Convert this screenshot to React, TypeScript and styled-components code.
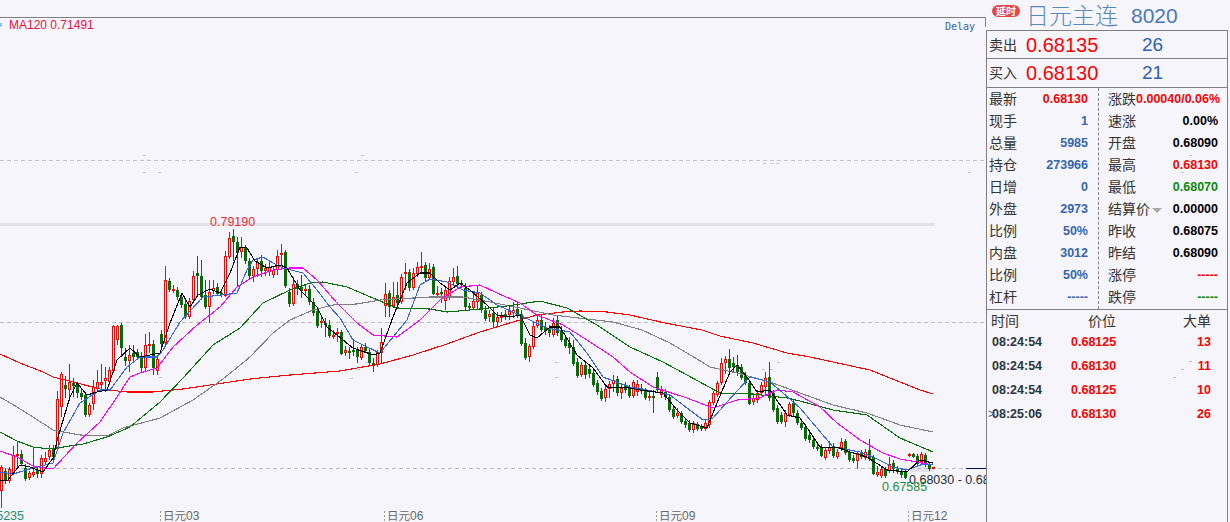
import React from 'react';
import styled, { createGlobalStyle } from 'styled-components';

const PAGE_BG = '#f5f5fb';
const RED = '#ff0000';
const CANDLE_GREEN = '#0a6a0a';
const BLUE_VALUE = '#3565ae';
const FRAME_GRAY = '#808080';
const CJK_STACK = '"Noto Sans CJK SC", "Liberation Sans", sans-serif';
const NUM_STACK = '"Liberation Sans", Arial, sans-serif';

// kind top bottom high low, one candle every 4px starting at x=1
const CANDLES = `r 467 491 465 508|g 471 481 468 484|r 469 481 467 483|r 455 473 446 475|r 454 456 442 467|g 454 464 450 466|g 468 479 464 481|r 473 478 471 480|r 472 475 447 477|g 470 474 466 478|r 458 474 455 478|r 458 462 452 465|r 450 457 445 460|g 449 457 445 460|r 399 449 391 450|r 374 407 372 417|g 385 389 376 398|r 382 390 364 398|g 383 386 378 397|g 385 393 382 398|g 393 397 388 400|g 395 415 393 417|r 405 415 403 417|r 387 404 380 410|r 382 389 370 392|r 382 385 364 390|r 378 381 367 392|r 370 382 367 385|r 326 371 325 373|r 326 340 325 345|g 325 348 323 355|g 357 361 348 366|r 355 361 345 372|g 353 357 345 362|g 352 357 349 360
g 358 368 352 372|r 345 368 334 372|r 344 346 332 353|g 344 368 340 375|r 359 371 355 375|g 334 344 330 347|r 280 343 266 345|g 281 290 278 292|r 289 291 285 293|g 290 297 287 300|g 297 305 293 308|g 304 317 300 319|r 301 317 298 319|r 276 300 271 302|g 273 276 256 295|g 276 297 260 300|g 295 307 280 309|r 292 307 280 323|r 288 291 280 294|g 287 294 283 296|g 293 295 290 297|r 256 296 251 297|r 238 257 232 259|g 236 242 229 261|g 242 253 237 286|r 247 252 237 258|g 247 261 245 264|g 261 276 258 279|r 269 276 266 282|r 262 269 258 277|g 261 271 255 277|r 268 271 264 276|r 267 272 262 276|r 270 275 266 278|r 256 270 250 275|r 253 255 244 265|g 252 286 250 288|g 292 304 288 307|r 284 304 277 306|g 284 289 280 295|g 287 291 275 298|r 289 291 285 295|g 289 302 285 305|g 302 313 298 316|g 311 326 308 328|r 321 323 316 328|g 323 325 318 337|g 325 336 320 338|r 335 337 330 339|r 332 334 328 342|g 332 354 330 355|r 350 353 346 356|g 351 353 347 359|g 350 352 339 356|g 350 357 347 363|r 347 358 345 360|g 347 351 343 353|g 352 363 348 365|g 363 365 358 372|r 352 365 350 367|r 342 353 328 364
r 294 306 283 317|g 293 307 290 317|r 297 306 282 308|g 295 303 282 306|r 277 302 274 304|r 272 274 263 290|g 272 288 269 291|r 273 288 268 290|r 267 274 262 277|r 266 268 252 272|g 265 278 262 281|r 269 278 263 280|g 267 294 264 295|r 293 295 286 297|g 292 294 288 303|r 290 301 286 310|r 281 297 277 300|r 277 282 268 285|g 276 284 266 287|g 283 285 280 288|g 288 307 283 310|g 306 308 303 311|r 301 308 293 310|r 293 302 285 310|g 295 310 292 313|g 310 319 306 321|r 314 317 310 322|g 313 322 308 327|r 317 322 312 327|r 316 318 312 322|g 314 317 310 320|r 311 315 305 320|r 310 313 302 318|g 309 315 303 318|g 314 344 310 346|g 343 358 338 360|r 346 357 344 362|r 326 347 322 349|r 320 326 315 328|g 320 330 315 332|g 327 331 322 335|g 329 333 325 337|r 323 335 318 337|g 320 333 316 336|g 330 340 326 342|g 339 346 335 348|g 343 348 337 354|g 347 364 340 366|g 362 376 358 378|r 365 375 362 377|g 365 375 362 379|g 369 374 364 378|g 373 385 370 387|g 383 392 380 395|g 391 399 388 401|r 389 398 386 402|r 384 389 381 398|r 380 384 375 392|g 379 393 376 396
r 388 393 384 399|g 386 390 382 393|g 388 396 385 398|r 382 396 380 398|r 384 392 380 396|g 388 390 384 394|g 390 398 388 400|r 396 398 392 401|g 396 398 390 413|g 377 390 372 393|r 390 395 386 398|g 392 397 389 400|g 397 410 394 412|g 409 417 406 419|r 413 416 408 418|g 413 422 411 424|g 421 425 418 428|g 423 430 420 432|r 423 430 421 433|g 424 429 422 431|g 427 429 424 431|r 423 429 420 431|r 402 425 400 428|r 393 403 391 405|r 383 395 381 397|r 363 383 358 385|r 359 363 356 374|g 359 368 349 372|g 363 367 357 372|g 365 372 355 376|g 367 378 364 380|g 375 383 372 385|g 383 404 380 405|r 398 402 393 405|r 393 400 390 403|r 385 393 382 396|r 378 387 372 396|g 377 398 362 401|g 393 410 390 412|g 408 422 405 424|g 415 422 412 424|r 413 422 410 427|r 404 415 402 417|g 403 413 400 416|g 413 423 410 425
g 423 428 420 430|g 427 439 424 441|g 435 440 432 443|g 440 447 437 449|g 447 449 444 451|g 447 456 444 457|r 450 458 448 460|r 447 451 441 454|g 446 456 443 458|r 452 457 449 459|r 442 448 438 451|g 441 453 439 455|g 452 460 449 462|g 458 461 455 463|r 453 461 451 469|g 453 457 450 459|r 452 458 449 460|g 450 459 439 461|g 457 474 455 475|r 472 475 466 477|r 469 476 467 478|g 469 476 467 478|r 464 471 457 473|g 463 469 460 473|g 469 472 466 474|g 471 475 469 478|g 472 478 470 479|r 454 456 453 457|g 454 457 453 458|g 456 464 454 465|r 454 462 452 465|g 455 464 453 467|g 464 469 462 471|f 467 469 467 469`;

const MA_LINES: { color: string; points: string }[] = [
  {
    color: '#ff0000',
    points:
      '0,354 20,363 43,372 53,377 77,383 100,389 127,392 153,392 183,389 217,384 250,379 290,375 340,371 380,364 413,355 447,344 480,332 513,322 537,315 563,312 580,311 607,312 630,315 665,323 702,330 720,336 753,343 787,353 810,357 870,370 920,390 933,394',
  },
  {
    color: '#808080',
    points:
      '0,397 17,407 33,417 53,430 80,435 107,436 123,428 160,418 193,400 223,379 250,357 273,333 290,320 313,310 333,305 357,304 380,300 430,297 463,297 490,302 520,308 553,315 587,319 613,322 642,330 670,343 702,362 710,367 737,373 770,382 800,393 833,405 867,413 900,425 933,432',
  },
  {
    color: '#007000',
    points:
      '0,432 17,441 33,447 50,449 83,444 107,437 130,427 160,402 183,378 213,345 240,328 263,303 290,290 310,283 323,282 347,287 373,298 397,308 430,309 447,312 470,310 507,306 540,301 567,308 597,325 630,347 663,362 687,375 720,393 753,394 787,398 800,401 833,410 867,415 900,438 933,452',
  },
  {
    color: '#ff00ff',
    points:
      '0,451 17,457 33,466 53,469 77,443 100,422 117,397 130,377 140,373 157,368 173,347 197,325 220,307 237,287 253,277 273,270 290,268 303,268 317,280 337,303 357,323 373,335 397,337 420,320 440,300 460,287 480,285 497,293 520,303 537,315 563,325 587,340 613,357 630,372 653,387 687,398 713,408 737,400 760,398 777,390 793,392 820,407 837,423 860,440 883,453 900,459 917,462 933,465',
  },
  {
    color: '#3366dd',
    points:
      '0,472 13,474 33,468 53,463 63,433 80,403 100,390 110,390 127,367 140,357 157,357 163,350 180,322 203,297 222,295 237,293 247,270 253,260 263,257 273,263 283,268 303,273 317,290 330,307 340,318 353,340 367,347 380,353 407,320 420,285 430,279 447,282 463,290 480,293 497,305 513,312 547,328 570,332 587,353 603,377 630,387 647,390 670,395 687,408 703,420 713,418 727,402 750,377 770,382 783,393 800,408 817,428 833,447 860,452 873,457 893,467 907,470 920,465 933,464',
  },
  {
    color: '#000000',
    points:
      '0,481 8,480 20,465 30,467 43,472 53,458 58,437 70,397 77,383 87,395 97,392 107,390 117,360 130,348 140,357 150,355 160,353 170,323 182,293 190,307 198,295 210,289 220,293 230,273 240,247 247,248 255,261 267,268 280,265 287,268 300,290 317,307 327,327 343,340 353,348 373,355 380,353 393,317 407,283 420,273 430,273 440,283 450,290 460,283 470,290 487,305 497,315 510,317 520,315 530,335 537,338 550,327 560,327 577,355 593,368 607,387 630,388 640,390 663,393 677,410 690,423 707,428 717,403 730,372 737,365 747,377 757,392 770,390 787,415 800,418 810,432 820,447 840,448 850,452 867,457 887,470 907,472 920,460 933,463',
  },
];

const CHART_SPECKS = [
  [143, 155], [143, 172], [158, 172], [361, 155], [355, 172], [763, 163], [771, 163], [776, 163],
  [968, 172], [152, 362], [159, 377], [350, 378], [357, 369], [365, 362], [555, 362], [572, 362],
  [555, 377], [762, 369], [770, 369], [777, 362],
];

const AXIS_LABELS = [
  { tick: 160, label: '日元', num: '03' },
  { tick: 384, label: '日元', num: '06' },
  { tick: 656, label: '日元', num: '09' },
  { tick: 908, label: '日元', num: '12' },
];

const LEFT_STATS = [
  { label: '最新', value: '0.68130', color: RED },
  { label: '现手', value: '1', color: BLUE_VALUE },
  { label: '总量', value: '5985', color: BLUE_VALUE },
  { label: '持仓', value: '273966', color: BLUE_VALUE },
  { label: '日增', value: '0', color: BLUE_VALUE },
  { label: '外盘', value: '2973', color: BLUE_VALUE },
  { label: '比例', value: '50%', color: BLUE_VALUE },
  { label: '内盘', value: '3012', color: BLUE_VALUE },
  { label: '比例', value: '50%', color: BLUE_VALUE },
  { label: '杠杆', value: '-----', color: BLUE_VALUE },
];

const RIGHT_STATS = [
  { label: '涨跌', value: '0.00040/0.06%', color: RED },
  { label: '速涨', value: '0.00%', color: '#000' },
  { label: '开盘', value: '0.68090', color: '#000' },
  { label: '最高', value: '0.68130', color: RED },
  { label: '最低', value: '0.68070', color: '#0a8a0a' },
  { label: '结算价', value: '0.00000', color: '#000', caret: true },
  { label: '昨收', value: '0.68075', color: '#000' },
  { label: '昨结', value: '0.68090', color: '#000' },
  { label: '涨停', value: '-----', color: RED },
  { label: '跌停', value: '-----', color: '#0a8a0a' },
];

const TRADES = [
  { time: '08:24:54', price: '0.68125', size: 13 },
  { time: '08:24:54', price: '0.68130', size: 11 },
  { time: '08:24:54', price: '0.68125', size: 10 },
  { time: '08:25:06', price: '0.68130', size: 26, current: true },
];

const PANEL_SPECKS = [
  [203, 155], [195, 172], [203, 361], [195, 369], [187, 377],
];

const GlobalStyle = createGlobalStyle`
  html, body {
    margin: 0;
    padding: 0;
    background: ${PAGE_BG};
    overflow: hidden;
  }
`;

const Page = styled.div`
  display: flex;
  width: 1230px;
  height: 522px;
  background: ${PAGE_BG};
`;

const ChartArea = styled.div`
  flex: 0 0 986px;
  height: 522px;
  overflow: hidden;
`;

const ChartSvg = styled.svg`
  display: block;
`;

const Panel = styled.aside`
  position: relative;
  flex: 0 0 242px;
  display: flex;
  flex-direction: column;
`;

const Header = styled.header`
  display: flex;
  align-items: flex-start;
  height: 30px;
  padding-left: 6px;
`;

const DelayBadge = styled.span`
  width: 28px;
  height: 12px;
  margin-top: 5px;
  border-radius: 6px;
  background: #e8474c;
  color: #fff;
  font: bold 10px/12px ${CJK_STACK};
  text-align: center;
`;

const Title = styled.h1`
  margin: 0 0 0 6px;
  color: #5a88bd;
  font: 300 23px/29px ${CJK_STACK};
`;

const Code = styled.span`
  margin-left: 13px;
  color: #4a78b8;
  font: 21px/32px ${NUM_STACK};
`;

const Frame = styled.div`
  flex: 1;
  display: flex;
  flex-direction: column;
  border: 1px solid ${FRAME_GRAY};
  border-bottom: none;
`;

const QuoteRow = styled.div<{ $height: number }>`
  display: grid;
  grid-template-columns: 37px 116px auto;
  align-items: center;
  height: ${(p) => p.$height}px;
  padding-left: 2px;
  border-bottom: 1px solid ${FRAME_GRAY};
`;

const Label = styled.span`
  color: #333;
  font: 14px/20px ${CJK_STACK};
  white-space: nowrap;
`;

const RaisedLabel = styled(Label)`
  padding-bottom: 2px;
`;

const StatLabel = styled(RaisedLabel)`
  flex: 0 0 24px;
`;

const QuotePrice = styled.span`
  color: ${RED};
  font: 20px/28px ${NUM_STACK};
`;

const QuoteSize = styled.span`
  color: #2f62ad;
  font: 19px/28px ${NUM_STACK};
`;

const Stats = styled.div`
  display: grid;
  grid-template-columns: 111px minmax(0, 1fr);
  height: 221px;
  border-bottom: 1px solid ${FRAME_GRAY};
`;

const StatColumn = styled.div<{ $divided?: boolean }>`
  display: flex;
  flex-direction: column;
  padding: ${(p) => (p.$divided ? '0 9px 0 9px' : '0 10px 0 2px')};
  border-left: ${(p) => (p.$divided ? `1px dashed ${FRAME_GRAY}` : 'none')};
`;

const StatRow = styled.div`
  position: relative;
  display: flex;
  justify-content: space-between;
  align-items: center;
  height: 22px;
`;

const StatValue = styled.span<{ $color: string }>`
  color: ${(p) => p.$color};
  font: bold 12.5px/22px ${NUM_STACK};
  white-space: nowrap;
`;

const Caret = styled.i`
  position: absolute;
  left: 44px;
  top: 10px;
  width: 0;
  height: 0;
  border-left: 5px solid transparent;
  border-right: 5px solid transparent;
  border-top: 5px solid #a8a8a8;
`;

const TradeHead = styled.div`
  display: grid;
  grid-template-columns: 83px 1fr auto;
  align-items: center;
  height: 20px;
  padding: 0 16px 0 4px;
`;

const PriceHead = styled(Label)`
  margin-left: 14px;
`;

const TradeRow = styled.div`
  position: relative;
  display: grid;
  grid-template-columns: 79px 1fr auto;
  align-items: center;
  height: 24px;
  padding: 0 16px 0 5px;
`;

const TradeTime = styled.span`
  color: #2c3440;
  font: bold 12.5px/24px ${NUM_STACK};
`;

const TradePrice = styled.span`
  color: ${RED};
  font: bold 12.5px/24px ${NUM_STACK};
`;

const Marker = styled.span`
  position: absolute;
  left: 1px;
  top: 0;
  color: #2f62ad;
  font: 12px/24px ${NUM_STACK};
`;

const Speck = styled.i<{ $x: number; $y: number }>`
  position: absolute;
  left: ${(p) => p.$x}px;
  top: ${(p) => p.$y}px;
  width: 3px;
  height: 1px;
  background: #c4c4c8;
`;

type Candle = { kind: string; top: number; bottom: number; high: number; low: number };

function parseCandles(): Candle[] {
  return CANDLES.replace(/\n/g, '|')
    .split('|')
    .map((entry) => {
      const [kind, top, bottom, high, low] = entry.trim().split(' ');
      return { kind, top: +top, bottom: +bottom, high: +high, low: +low };
    });
}

function CandleMark({ candle, x }: { candle: Candle; x: number }) {
  const { kind, top, bottom, high, low } = candle;
  const color = kind === 'g' ? CANDLE_GREEN : RED;
  const height = bottom - top;
  return (
    <g fill={color}>
      <rect x={x} y={high} width={1} height={Math.max(top - high, 0)} />
      <rect x={x} y={bottom} width={1} height={Math.max(low - bottom, 0)} />
      <rect x={x - 1} y={top} width={3} height={height} />
      {kind === 'r' && height > 2 && <rect x={x} y={top + 1} width={1} height={height - 2} fill={PAGE_BG} />}
    </g>
  );
}

function Chart() {
  const candles = parseCandles();
  return (
    <ChartSvg width={986} height={522} viewBox='0 0 986 522' shapeRendering='crispEdges'>
      <rect x={0} y={17} width={986} height={1} fill={FRAME_GRAY} />
      <rect x={985} y={17} width={1} height={10} fill={FRAME_GRAY} />
      <circle cx={0} cy={25} r={2} fill='#8cc4f0' />

      <rect x={0} y={223} width={935} height={3} fill='#e1e1e6' />
      <rect x={910} y={466} width={25} height={6} fill='#e1e1e6' />

      <line x1={0} x2={985} y1={160.5} y2={160.5} stroke='#c4c4c8' strokeDasharray='4 3' />
      <line x1={0} x2={985} y1={322.5} y2={322.5} stroke='#bdbdc2' strokeDasharray='4 3' />
      <line x1={0} x2={966} y1={468.5} y2={468.5} stroke='#bdbdc2' strokeDasharray='4 3' />
      <rect x={966} y={468} width={20} height={1} fill='#000060' />

      {CHART_SPECKS.map(([x, y]) => (
        <rect key={`${x}-${y}`} x={x} y={y} width={3} height={1} fill='#c4c4c8' />
      ))}

      {candles.map((candle, i) => (
        <CandleMark key={i} candle={candle} x={1 + i * 4} />
      ))}

      {MA_LINES.map((line) => (
        <polyline key={line.color} points={line.points} fill='none' stroke={line.color} strokeWidth={1.1} />
      ))}

      <g fontFamily={NUM_STACK} shapeRendering='auto'>
        <text x={9} y={29} fontSize={12} fill='#f0103c'>
          MA120 0.71491
        </text>
        <text x={945} y={30} fontSize={10} fontFamily='"DejaVu Sans Mono", monospace' fill='#3565a4'>
          Delay
        </text>
        <text x={210} y={226} fontSize={12.5} fill='#ee2a3a'>
          0.79190
        </text>
        <text x={909} y={484} fontSize={12.5} fill='#222c38'>
          0.68030 - 0.68130
        </text>
        <text x={882} y={491} fontSize={12.5} fill='#1f8f3f'>
          0.67585
        </text>
        <text x={24} y={520} fontSize={12.5} textAnchor='end' fill='#1f8f6f'>
          0.75235
        </text>
        {AXIS_LABELS.map((axis) => (
          <g key={axis.num}>
            <line x1={axis.tick} x2={axis.tick} y1={511} y2={522} stroke='#999' strokeDasharray='2 2' shapeRendering='crispEdges' />
            <text x={axis.tick + 3} y={520} fontSize={11.5} fill='#666' fontFamily={CJK_STACK}>
              {axis.label}
              <tspan fontFamily={NUM_STACK} fontSize={12}>
                {axis.num}
              </tspan>
            </text>
          </g>
        ))}
      </g>
    </ChartSvg>
  );
}

export default function App() {
  return (
    <>
      <GlobalStyle />
      <Page>
        <ChartArea>
          <Chart />
        </ChartArea>
        <Panel>
          <Header>
            <DelayBadge>延时</DelayBadge>
            <Title>日元主连</Title>
            <Code>8020</Code>
          </Header>
          <Frame>
            <QuoteRow $height={27}>
              <RaisedLabel>卖出</RaisedLabel>
              <QuotePrice>0.68135</QuotePrice>
              <QuoteSize>26</QuoteSize>
            </QuoteRow>
            <QuoteRow $height={28}>
              <RaisedLabel>买入</RaisedLabel>
              <QuotePrice>0.68130</QuotePrice>
              <QuoteSize>21</QuoteSize>
            </QuoteRow>
            <Stats>
              <StatColumn>
                {LEFT_STATS.map((stat, i) => (
                  <StatRow key={i}>
                    <StatLabel>{stat.label}</StatLabel>
                    <StatValue $color={stat.color}>{stat.value}</StatValue>
                  </StatRow>
                ))}
              </StatColumn>
              <StatColumn $divided>
                {RIGHT_STATS.map((stat) => (
                  <StatRow key={stat.label}>
                    <StatLabel>{stat.label}</StatLabel>
                    {stat.caret && <Caret />}
                    <StatValue $color={stat.color}>{stat.value}</StatValue>
                  </StatRow>
                ))}
              </StatColumn>
            </Stats>
            <TradeHead>
              <Label>时间</Label>
              <PriceHead>价位</PriceHead>
              <Label>大单</Label>
            </TradeHead>
            <div>
              {TRADES.map((trade) => (
                <TradeRow key={trade.time + trade.size}>
                  {trade.current && <Marker>&gt;</Marker>}
                  <TradeTime>{trade.time}</TradeTime>
                  <TradePrice>{trade.price}</TradePrice>
                  <TradePrice>{trade.size}</TradePrice>
                </TradeRow>
              ))}
            </div>
          </Frame>
          {PANEL_SPECKS.map(([x, y]) => (
            <Speck key={`${x}-${y}`} $x={x} $y={y} />
          ))}
        </Panel>
      </Page>
    </>
  );
}
